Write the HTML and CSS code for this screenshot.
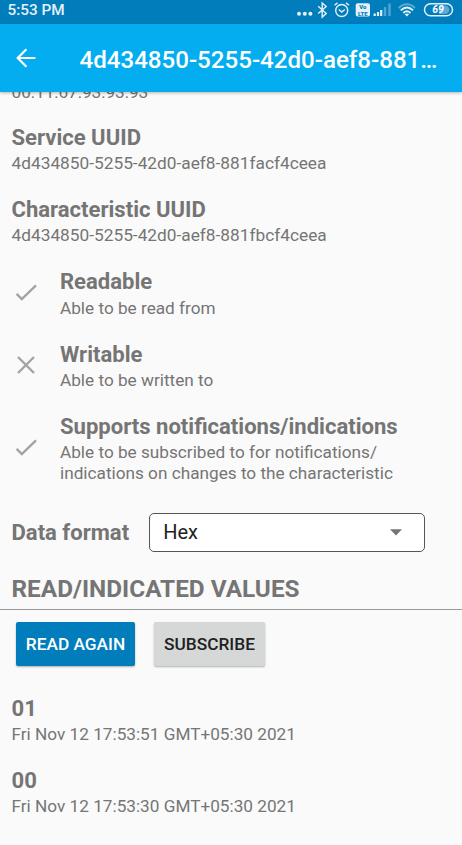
FILE: index.html
```html
<!DOCTYPE html>
<html lang="en">
<head>
<meta charset="utf-8">
<title>Characteristic details</title>
<link rel="stylesheet" href="styles.css">
</head>
<body>
<div class="status">
  <span class="clock">5:53 PM</span>
  <svg class="status-icons" width="166" height="24" viewBox="0 0 166 24" fill="none" stroke="#e4f1f8">
    <g fill="#e4f1f8" stroke="none"><circle cx="3" cy="13.8" r="2"/><circle cx="8.8" cy="13.8" r="2"/><circle cx="14.4" cy="13.8" r="2"/></g>
    <path d="M22.2 6.3l8 7.2-4 3.6V3l4 3.4-8 7.2" stroke-width="1.4"/>
    <circle cx="45.7" cy="10.5" r="6" stroke-width="1.4"/>
    <path d="M42.8 9.5l3 2.5 3-2.5M38.5 5.2l3-2.3M53 5.2l-3-2.3" stroke-width="1.4"/>
    <rect x="59.7" y="3.3" width="14.3" height="13.2" rx="2" fill="#e4f1f8" stroke="none"/>
    <g stroke="none" fill="#0580bd" class="volte"><text x="66.8" y="9">Vo</text><text x="66.8" y="15.7">LTE</text></g>
    <path d="M78.7 16v-2.500M82 16v-4M85.2 16v-6" stroke-width="2.200"/>
    <path d="M89 16V7M93.5 16V3.500" stroke-width="2.400" opacity=".35"/>
    <path d="M102.7 8c5-5 11.300-5 16.300 0" stroke-width="1.800" opacity=".4"/>
    <path d="M104.700 10.400c4-3.800 8.400-3.800 12.400 0M107.300 13c2.300-2.200 4.900-2.200 7.200 0" stroke-width="1.800"/>
    <path d="M108.700 14.200q2.200-1.500 4.400 0l-2.200 2.400z" fill="#e4f1f8" stroke="none"/>
    <rect x="128.500" y="3.800" width="28" height="12" rx="6" stroke-width="1.500"/>
    <path d="M143 5.500h6a4.300 4.300 0 0 1 0 8.600h-6z" fill="#5babd4" stroke="none"/>
    <text class="battery" x="142" y="13.300" fill="#fff" stroke="none">69</text>
  </svg>
</div>
<header class="appbar">
  <svg class="back" width="20" height="20" viewBox="0 0 20 20" fill="none" stroke="#fff" stroke-width="2.200"><path d="M19.400 10H2M10.400 1.200L1.700 10l8.700 8.800"/></svg>
  <h1>4d434850-5255-42d0-aef8-881…</h1>
</header>
<main>
  <div class="address">00:11:67:93:93:93</div>
  <section class="item"><h2>Service UUID</h2><p class="uuid">4d434850-5255-42d0-aef8-881facf4ceea</p></section>
  <section class="item"><h2>Characteristic UUID</h2><p class="uuid">4d434850-5255-42d0-aef8-881fbcf4ceea</p></section>
  <section class="item flag">
    <svg width="24" height="24" viewBox="0 0 24 24"><path d="M2.600 12.800l5.200 5.200L22 4.400"/></svg>
    <div><h2>Readable</h2><p>Able to be read from</p></div>
  </section>
  <section class="item flag">
    <svg width="24" height="24" viewBox="0 0 24 24"><path d="M4 4l16 16M20 4L4 20"/></svg>
    <div><h2>Writable</h2><p>Able to be written to</p></div>
  </section>
  <section class="item flag">
    <svg width="24" height="24" viewBox="0 0 24 24"><path d="M2.600 12.800l5.200 5.200L22 4.400"/></svg>
    <div><h2>Supports notifications/indications</h2><p>Able to be subscribed to for notifications/<br>indications on changes to the characteristic</p></div>
  </section>
  <div class="format">
    <h2>Data format</h2>
    <div class="select"><span>Hex</span><svg width="12" height="7" viewBox="0 0 12 7"><path d="M0 .3h12L6 6.500z" fill="#757575"/></svg></div>
  </div>
  <h2 class="values">READ/INDICATED VALUES</h2>
  <div class="actions"><button class="primary">READ AGAIN</button><button class="secondary">SUBSCRIBE</button></div>
  <section class="item"><h2>01</h2><p>Fri Nov 12 17:53:51 GMT+05:30 2021</p></section>
  <section class="item"><h2>00</h2><p>Fri Nov 12 17:53:30 GMT+05:30 2021</p></section>
</main>
</body>
</html>
```
FILE: styles.css
```css
* { box-sizing: border-box; }
body { margin: 0; height: 845px; overflow: hidden; background: #fafafa; color: #757575; font-family: Roboto, "Liberation Sans", sans-serif; }
h1, h2, p { margin: 0; white-space: nowrap; }
.status { height: 24px; display: flex; justify-content: space-between; background: #027dbb; }
.clock { padding-left: 7.5px; color: #e4f1f8; font-size: 15.3px; font-weight: 500; line-height: 21px; }
.volte { font-size: 6px; line-height: 6px; font-weight: 900; text-anchor: middle; }
.battery { font-size: 10.5px; font-weight: 700; font-style: italic; text-anchor: middle; }
.appbar { position: relative; height: 68px; display: flex; align-items: center; padding-left: 16px; background: #03adf0; box-shadow: 0 1px 3px rgba(0, 0, 0, .28); }
.appbar h1 { margin-left: 43.5px; padding-top: 3.5px; color: #fff; font-size: 24.1px; font-weight: 500; }
.address { height: 32.6px; padding-left: 11.5px; font-size: 17.2px; line-height: 20px; margin-top: -10.4px; }
h2 { font-size: 22.05px; font-weight: 700; line-height: 26px; }
p { font-size: 17.22px; line-height: 20.5px; padding-top: 2.2px; }
.uuid { font-size: 17.3px; }
.item { height: 72.3px; padding: 10.6px 11.5px 0; }
.flag { display: flex; gap: 21.5px; }
.flag:has(br) { height: 92.8px; }
.flag svg { width: 27px; height: 24px; padding-left: 1px; align-self: center; margin-top: -14.4px; fill: none; stroke: #a3a3a3; stroke-width: 2.4; }
.format { display: flex; align-items: center; height: 39px; margin: 16.6px 0 0 11.5px; }
.format h2 { padding-top: 1px; }
.select { width: 276px; height: 39px; margin-left: 19.5px; padding: 0 22px 0 13.5px; display: flex; align-items: center; justify-content: space-between; border: 1.5px solid #555; border-radius: 5px; background: #fff; color: #212121; font-size: 20px; }
.values { height: 58px; padding: 24px 11.5px 0; font-size: 24.35px; line-height: 26px; border-bottom: 1px solid #999; }
.actions { display: flex; gap: 19px; height: 75.5px; padding: 12px 16px 0; }
button { height: 44px; border: 0; border-radius: 2px; padding: 0; font: 500 17.3px Roboto, sans-serif; box-shadow: 0 1px 2px rgba(0, 0, 0, .3); }
.primary { width: 119px; background: #027dbb; color: #fff; }
.secondary { width: 111px; background: #d6d7d7; color: #212121; }
```
